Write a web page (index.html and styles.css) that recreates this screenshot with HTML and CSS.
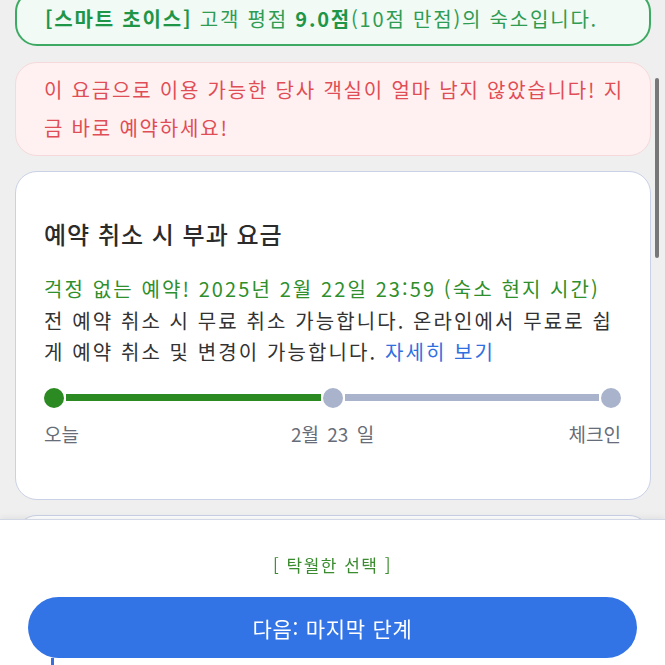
FILE: index.html
```html
<!DOCTYPE html>
<html lang="ko">
<head>
    <meta charset="UTF-8">
    <meta name="viewport" content="width=device-width, initial-scale=1.0">
    <title>예약 정보</title>
    <link rel="stylesheet" href="styles.css">
</head>
<body>

    <div class="page">
        <div class="notice notice-good">
            <b>[스마트 초이스]</b> 고객 평점 <b>9.0점</b>(10점 만점)의 숙소입니다.
        </div>

        <div class="notice notice-alert">
            이 요금으로 이용 가능한 당사 객실이 얼마 남지 않았습니다! 지금 바로 예약하세요!
        </div>

        <div class="card">
            <h2>예약 취소 시 부과 요금</h2>
            <p class="policy">
                <span class="free">걱정 없는 예약! 2025년 2월 22일 23:59 (숙소 현지 시간)</span>
                <span>전 예약 취소 시 무료 취소 가능합니다. 온라인에서 무료로 쉽게 예약 취소 및 변경이 가능합니다.</span>
                <a href="#">자세히 보기</a>
            </p>

            <div class="timeline">
                <span class="dot done"></span>
                <span class="bar done"></span>
                <span class="dot"></span>
                <span class="bar"></span>
                <span class="dot"></span>
            </div>
            <div class="timeline-labels">
                <span>오늘</span>
                <span class="mid">2월 23 일</span>
                <span class="end">체크인</span>
            </div>
        </div>

        <div class="card card-next"></div>
    </div>

    <div class="scrollbar"></div>

    <div class="sheet">
        <div class="badge">[ 탁월한 선택 ]</div>
        <button type="button">다음: 마지막 단계</button>
        <span class="caret"></span>
    </div>

</body>
</html>
```

FILE: styles.css
```css
body {
    margin: 0;
    background-color: #efefef;
    font-family: "Noto Sans CJK KR", "Noto Sans", sans-serif;
    overflow: hidden;
    height: 665px;
}
.page {
    margin-top: -10px;
    padding: 0 14px 0 15px;
}
.notice {
    border-radius: 22px;
    padding: 0 28px;
    font-size: 20px;
    letter-spacing: 1.8px;
    word-break: break-all;
}
.notice-good {
    background-color: #f1faf4;
    border: 2px solid #3daa63;
    color: #2f9c53;
    height: 56px;
    line-height: 54px;
    box-sizing: border-box;
    white-space: nowrap;
}
.notice-good b {
    color: #1f9548;
}
.notice-alert {
    margin-top: 16px;
    background-color: #fff1f1;
    border: 1px solid #f6d9da;
    color: #df4d56;
    line-height: 38px;
    padding-top: 8px;
    padding-bottom: 8px;
    padding-right: 20px;
}
.card {
    margin-top: 15px;
    background-color: #fff;
    border: 1px solid #c9d1e6;
    border-radius: 22px;
    padding: 47px 29px 52px 28px;
}
.card h2 {
    margin: 0;
    font-size: 24px;
    letter-spacing: 1px;
    font-weight: 500;
    color: #2b2b2b;
    line-height: 30px;
}
.policy {
    margin: 24px 0 0 0;
    font-size: 20px;
    letter-spacing: 2.1px;
    line-height: 31.5px;
    color: #333;
    word-break: break-all;
}
.policy .free {
    display: block;
    color: #2e8f2c;
}
.policy a {
    color: #2f6fe0;
    text-decoration: none;
}
.timeline {
    display: flex;
    align-items: center;
    gap: 2px;
    margin-top: 20px;
}
.dot {
    width: 20px;
    height: 20px;
    border-radius: 50%;
    background-color: #a9b3cc;
    flex: none;
}
.bar {
    flex: 1;
    height: 7px;
    background-color: #a9b3cc;
}
.dot.done, .bar.done {
    background-color: #2b8a22;
}
.timeline-labels {
    display: grid;
    grid-template-columns: 1fr auto 1fr;
    margin-top: 12px;
    font-size: 19px;
    word-spacing: 3px;
    color: #676d78;
}
.timeline-labels .end {
    justify-self: end;
}
.card-next {
    height: 120px;
    padding: 0;
}
.scrollbar {
    position: absolute;
    top: 78px;
    left: 655px;
    width: 4px;
    height: 180px;
    border-radius: 2px;
    background-color: #777;
}
.sheet {
    position: fixed;
    left: 0;
    right: 0;
    bottom: 0;
    height: 145px;
    background-color: #fff;
    border-top: 1px solid #d2d8e6;
    box-shadow: 0 -2px 6px rgba(0, 0, 0, 0.06);
    text-align: center;
}
.badge {
    margin-top: 34px;
    font-size: 17px;
    letter-spacing: 1.5px;
    color: #3b8c30;
    line-height: 22px;
}
.sheet button {
    display: block;
    margin: 21px 28px 0 28px;
    width: calc(100% - 56px);
    height: 61px;
    border: none;
    border-radius: 31px;
    background-color: #3273e6;
    color: #fff;
    font-family: inherit;
    font-size: 21px;
    letter-spacing: 0.7px;
    cursor: pointer;
}
.caret {
    position: absolute;
    left: 51px;
    bottom: 0;
    width: 3px;
    height: 7px;
    background-color: #3a6ee0;
}
```
